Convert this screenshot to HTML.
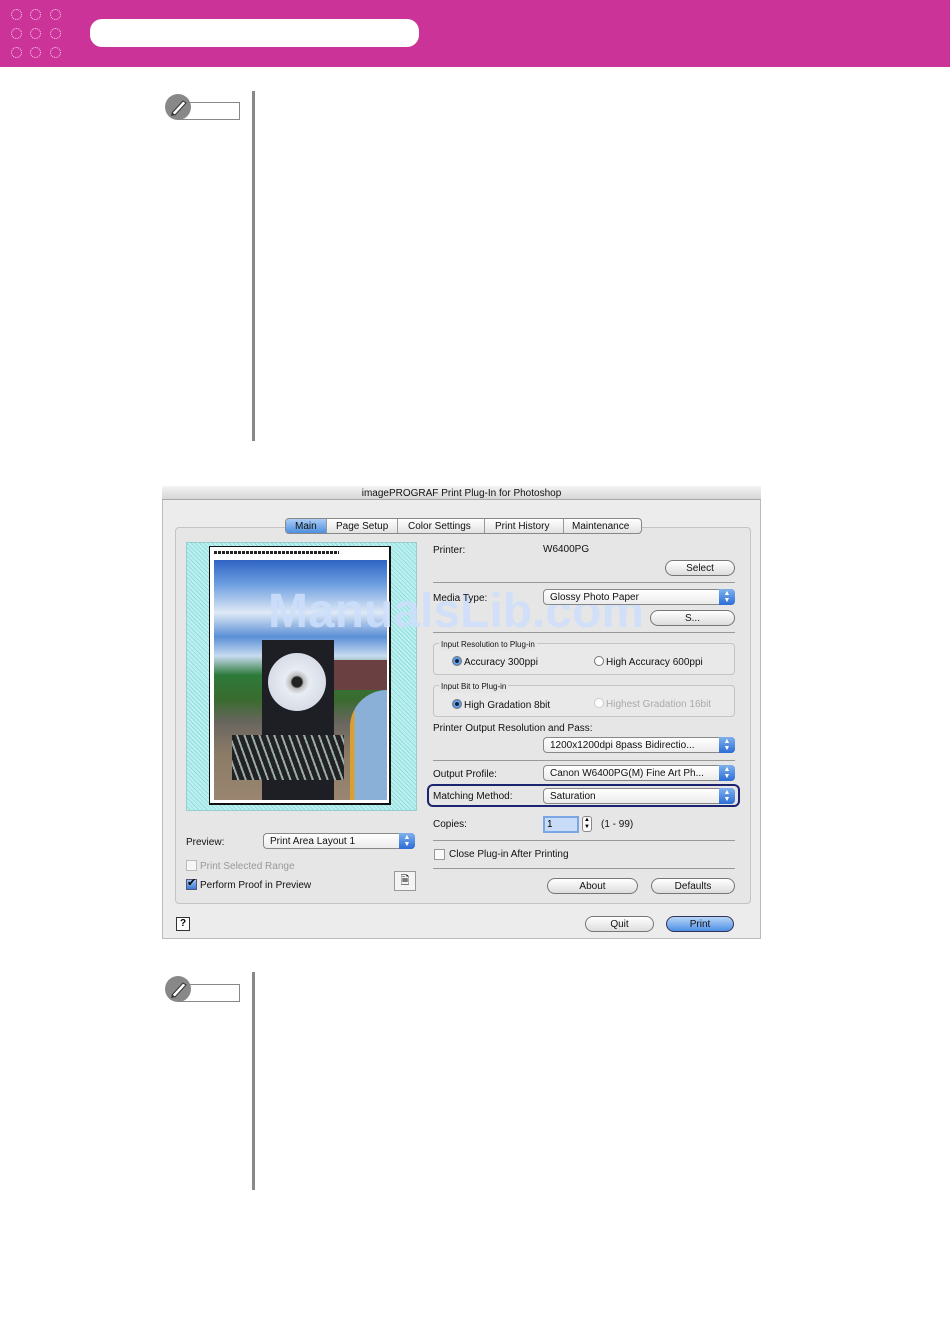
<!DOCTYPE html>
<html><head><meta charset="utf-8">
<style>
*{margin:0;padding:0;box-sizing:border-box}
body{width:950px;height:1344px;background:#fff;position:relative;overflow:hidden;font-family:"Liberation Sans",sans-serif}
.a{position:absolute}
.t{position:absolute;font-size:10px;color:#111;white-space:nowrap;line-height:12px;margin-top:1px}
.hdr{left:0;top:0;width:950px;height:67px;background:#cc3399}
.dot{position:absolute;width:11px;height:11px;border:1.5px dotted #fad0ec;border-radius:50%}
.pop{position:absolute;height:16px;background:linear-gradient(#fff,#ececec);border:1px solid #888;border-radius:4px;font-size:10px;padding-left:6px;line-height:15px;color:#111}
.pop .ar{position:absolute;right:-1px;top:-1px;width:16px;height:16px;background:linear-gradient(#7fb0ee,#2c6ed6);border-radius:0 4px 4px 0;color:#fff;font-size:7px;text-align:center;line-height:7px;padding-top:1px}
.btn{position:absolute;height:16px;border:1px solid #777;border-radius:9px;background:linear-gradient(#fff,#ddd);font-size:10px;text-align:center;line-height:15px;color:#111}
.line{position:absolute;height:1px;background:#999}
.rad{display:inline-block;width:10px;height:10px;border-radius:50%;border:1px solid #777;background:#fff;vertical-align:-1px;margin-right:2px}
.rad.on{background:radial-gradient(#123 30%,#6aa4ec 40%,#3b7fd8)}
.grp{position:absolute;border:1px solid #c4c4c4;border-radius:4px;background:#e9e9e9}
.note{position:absolute;width:26px;height:26px;border-radius:50%;background:#888}
.nbox{position:absolute;width:62px;height:18px;border:1px solid #888;background:#fff}
.vl{position:absolute;width:3px;background:#888}
</style></head><body>
<div class="a hdr"></div>
<div class="dot" style="left:11px;top:9px"></div><div class="dot" style="left:30px;top:9px"></div><div class="dot" style="left:50px;top:9px"></div>
<div class="dot" style="left:11px;top:28px"></div><div class="dot" style="left:30px;top:28px"></div><div class="dot" style="left:50px;top:28px"></div>
<div class="dot" style="left:11px;top:47px"></div><div class="dot" style="left:30px;top:47px"></div><div class="dot" style="left:50px;top:47px"></div>
<div class="a" style="left:90px;top:19px;width:329px;height:28px;background:#fff;border-radius:12px"></div>

<div class="nbox" style="left:178px;top:102px"></div>
<div class="note" style="left:165px;top:94px"></div>
<svg class="a" style="left:165px;top:94px" width="26" height="26"><path d="M7 19 L18 7 L21 9 L10 21 Z" fill="#fff" stroke="#333" stroke-width="1"/><path d="M7 19 L6 22 L10 21" fill="#333"/></svg>
<div class="vl" style="left:252px;top:91px;height:350px"></div>

<div class="nbox" style="left:178px;top:984px"></div>
<div class="note" style="left:165px;top:976px"></div>
<svg class="a" style="left:165px;top:976px" width="26" height="26"><path d="M7 19 L18 7 L21 9 L10 21 Z" fill="#fff" stroke="#333" stroke-width="1"/><path d="M7 19 L6 22 L10 21" fill="#333"/></svg>
<div class="vl" style="left:252px;top:972px;height:218px"></div>

<div class="a" style="left:162px;top:486px;width:599px;height:453px;background:#ececec;border:1px solid #bbb"></div>
<div class="a" style="left:162px;top:486px;width:599px;height:14px;background:linear-gradient(#f4f4f4,#d6d6d6);border-bottom:1px solid #aaa"></div>
<div class="t" style="left:162px;width:599px;top:487px;text-align:center;font-size:10px">imagePROGRAF Print Plug-In for Photoshop</div>
<div class="grp" style="left:175px;top:527px;width:576px;height:377px;background:#e6e6e6"></div>
<div class="a" style="left:285px;top:518px;width:357px;height:16px;border:1px solid #888;border-radius:4px;background:linear-gradient(#fff,#e2e2e2)"></div>
<div class="a" style="left:286px;top:519px;width:40px;height:14px;background:linear-gradient(#a9cdf5,#4d8fe0);border-radius:3px 0 0 3px"></div>
<div class="t" style="left:295px;top:520px">Main</div>
<div class="a" style="left:326px;top:519px;width:1px;height:14px;background:#999"></div>
<div class="t" style="left:336px;top:520px">Page Setup</div>
<div class="a" style="left:397px;top:519px;width:1px;height:14px;background:#999"></div>
<div class="t" style="left:408px;top:520px">Color Settings</div>
<div class="a" style="left:484px;top:519px;width:1px;height:14px;background:#999"></div>
<div class="t" style="left:495px;top:520px">Print History</div>
<div class="a" style="left:563px;top:519px;width:1px;height:14px;background:#999"></div>
<div class="t" style="left:572px;top:520px">Maintenance</div>

<div class="a" style="left:186px;top:542px;width:231px;height:269px;border:1px solid #9cc;background:repeating-linear-gradient(45deg,#bff0f0 0 2px,#8fdede 2px 3px)"></div>
<div class="a" style="left:209px;top:546px;width:182px;height:259px;background:#fff;border:1px solid #111;border-right-width:2px;border-bottom-width:2px"></div>
<div class="a" style="left:214px;top:551px;width:125px;height:3px;background:repeating-linear-gradient(90deg,#222 0 3px,#fff 3px 4px)"></div>
<div class="a" style="left:214px;top:560px;width:173px;height:240px;background:linear-gradient(#2f64c4 0%,#6d9ee0 10%,#dfe9f6 22%,#5a8fd6 32%,#c8dbf0 40%,#2d7a3a 48%,#3a6b2e 58%,#6a6660 68%,#8a7a66 80%,#9a8670 100%)"></div>
<div class="a" style="left:262px;top:640px;width:72px;height:160px;background:#1d1f24"></div>
<div class="a" style="left:232px;top:735px;width:112px;height:45px;background:repeating-linear-gradient(70deg,#222 0 5px,#9aa 5px 7px)"></div>
<div class="a" style="left:268px;top:653px;width:58px;height:58px;border-radius:50%;background:radial-gradient(#222 12%,#bbb 16%,#e8ecf4 30%,#d8dce6 70%)"></div>
<div class="a" style="left:334px;top:660px;width:53px;height:30px;background:#6a4040"></div>
<div class="a" style="left:350px;top:690px;width:37px;height:110px;background:linear-gradient(90deg,#d8a030 0 12%,#8ab0d8 12% 100%);border-radius:40px 0 0 0"></div>
<div class="t" style="left:268px;top:586px;font-size:48px;line-height:50px;font-weight:bold;color:rgba(205,222,250,.85)">ManualsLib.com</div>

<div class="t" style="left:186px;top:836px">Preview:</div>
<div class="pop" style="left:263px;top:833px;width:152px">Print Area Layout 1<div class="ar">▲<br>▼</div></div>
<div class="a" style="left:186px;top:860px;width:11px;height:11px;border:1px solid #bbb;background:#f6f6f6"></div>
<div class="t" style="left:200px;top:860px;color:#999">Print Selected Range</div>
<div class="a" style="left:186px;top:879px;width:11px;height:11px;border:1px solid #557;background:linear-gradient(#9cc4f2,#3c7ad8)"></div>
<div class="t" style="left:187px;top:876px;font-size:11px;color:#000">✔</div>
<div class="t" style="left:200px;top:879px">Perform Proof in Preview</div>
<div class="a" style="left:394px;top:871px;width:22px;height:20px;border:1px solid #999;background:#f4f4f4;font-size:11px;text-align:center;line-height:18px">🗎</div>

<div class="t" style="left:433px;top:544px">Printer:</div>
<div class="t" style="left:543px;top:543px">W6400PG</div>
<div class="btn" style="left:665px;top:560px;width:70px">Select</div>
<div class="line" style="left:433px;top:582px;width:302px"></div>
<div class="t" style="left:433px;top:592px">Media Type:</div>
<div class="pop" style="left:543px;top:589px;width:192px">Glossy Photo Paper<div class="ar">▲<br>▼</div></div>
<div class="btn" style="left:650px;top:610px;width:85px">S...</div>
<div class="line" style="left:433px;top:632px;width:302px"></div>
<div class="grp" style="left:433px;top:643px;width:302px;height:32px"></div>
<div class="t" style="left:439px;top:638px;font-size:8px;background:#e6e6e6;padding:0 2px">Input Resolution to Plug-in</div>
<div class="t" style="left:452px;top:655px"><span class="rad on"></span>Accuracy 300ppi</div>
<div class="t" style="left:594px;top:655px"><span class="rad"></span>High Accuracy 600ppi</div>
<div class="grp" style="left:433px;top:685px;width:302px;height:32px"></div>
<div class="t" style="left:439px;top:680px;font-size:8px;background:#e6e6e6;padding:0 2px">Input Bit to Plug-in</div>
<div class="t" style="left:452px;top:698px"><span class="rad on"></span>High Gradation 8bit</div>
<div class="t" style="left:594px;top:697px;color:#aaa"><span class="rad" style="border-color:#ccc"></span>Highest Gradation 16bit</div>
<div class="t" style="left:433px;top:722px">Printer Output Resolution and Pass:</div>
<div class="pop" style="left:543px;top:737px;width:192px">1200x1200dpi 8pass Bidirectio...<div class="ar">▲<br>▼</div></div>
<div class="line" style="left:433px;top:760px;width:302px"></div>
<div class="t" style="left:433px;top:768px">Output Profile:</div>
<div class="pop" style="left:543px;top:765px;width:192px">Canon W6400PG(M) Fine Art Ph...<div class="ar">▲<br>▼</div></div>
<div class="a" style="left:427px;top:784px;width:313px;height:23px;border:2px solid #1c2470;border-radius:6px"></div>
<div class="t" style="left:433px;top:790px">Matching Method:</div>
<div class="pop" style="left:543px;top:788px;width:192px">Saturation<div class="ar">▲<br>▼</div></div>
<div class="t" style="left:433px;top:818px">Copies:</div>
<div class="a" style="left:543px;top:816px;width:36px;height:17px;background:#c8dcf8;border:2px solid #7aa6e6;font-size:10px;padding-left:2px;line-height:14px">1</div>
<div class="a" style="left:582px;top:816px;width:10px;height:16px;border:1px solid #888;border-radius:3px;background:#fafafa;font-size:6px;text-align:center;line-height:7px">▲<br>▼</div>
<div class="t" style="left:601px;top:818px">(1 - 99)</div>
<div class="line" style="left:433px;top:840px;width:302px"></div>
<div class="a" style="left:434px;top:849px;width:11px;height:11px;border:1px solid #999;background:#fafafa"></div>
<div class="t" style="left:449px;top:848px">Close Plug-in After Printing</div>
<div class="line" style="left:433px;top:868px;width:302px"></div>
<div class="btn" style="left:547px;top:878px;width:91px">About</div>
<div class="btn" style="left:651px;top:878px;width:84px">Defaults</div>

<div class="a" style="left:176px;top:917px;width:14px;height:14px;border:1px solid #333;background:#fff;font-size:10px;text-align:center;line-height:12px;font-weight:bold">?</div>
<div class="btn" style="left:585px;top:916px;width:69px">Quit</div>
<div class="btn" style="left:666px;top:916px;width:68px;background:linear-gradient(#b8d6f8,#4c90e6);border-color:#335">Print</div>
</body></html>
